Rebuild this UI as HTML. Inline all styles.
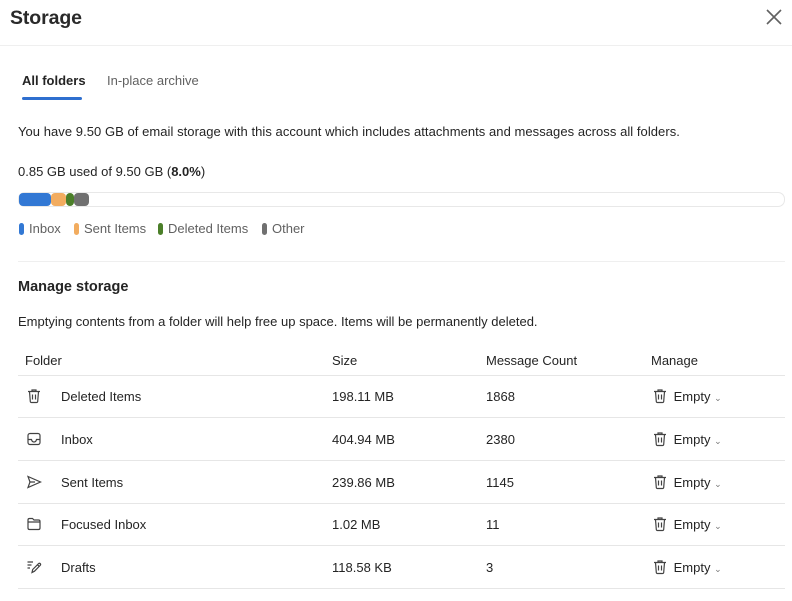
<!DOCTYPE html>
<html><head><meta charset="utf-8"><style>
*{margin:0;padding:0;box-sizing:border-box}
body{width:792px;height:601px;background:#fff;font-family:"Liberation Sans",sans-serif;color:#242424;position:relative;overflow:hidden;font-size:13px}
.a{position:absolute;white-space:nowrap}
.t{font-size:13px}
.line{position:absolute;height:1px;background:#e6e6e6}
.seg{position:absolute;top:193px;height:13px;border-radius:4px}
.dot{display:inline-block;width:5px;height:12px;border-radius:3px;vertical-align:-2px;margin-right:5px}
.lg{color:#616161;top:221px}
.ic{position:absolute;stroke:#424242;fill:none;stroke-width:1.2}
</style></head><body>
<div class="a" style="left:10px;top:7px;font-size:19.5px;font-weight:bold;letter-spacing:-.1px;color:#2a2a2a">Storage</div>
<svg class="a" style="left:765px;top:8px" width="18" height="18" viewBox="0 0 18 18"><path d="M2 2L16 16M16 2L2 16" stroke="#616161" stroke-width="1.6"/></svg>
<div class="line" style="left:0;top:45px;width:792px;background:#efefef"></div>
<div class="a t" style="left:22px;top:73px;font-weight:bold">All folders</div>
<div class="a t" style="left:107px;top:73px;color:#616161">In-place archive</div>
<div class="a" style="left:22px;top:97px;width:60px;height:3px;background:#2f6fcf;border-radius:2px"></div>
<div class="a t" style="left:18px;top:124px;letter-spacing:.05px">You have 9.50 GB of email storage with this account which includes attachments and messages across all folders.</div>
<div class="a t" style="left:18px;top:164px">0.85 GB used of 9.50 GB (<b>8.0%</b>)</div>
<div class="a" style="left:18px;top:192px;width:767px;height:15px;border:1px solid #e8e8e8;border-radius:7px"></div>
<div class="seg" style="left:19px;width:32px;background:#3278d4"></div>
<div class="seg" style="left:51px;width:15px;background:#f2ac5f"></div>
<div class="seg" style="left:66px;width:8px;background:#4b7f29"></div>
<div class="seg" style="left:74px;width:15px;background:#707070"></div>
<div class="a lg t" style="left:19px"><span class="dot" style="background:#3278d4"></span>Inbox</div>
<div class="a lg t" style="left:74px"><span class="dot" style="background:#f2ac5f"></span>Sent Items</div>
<div class="a lg t" style="left:158px"><span class="dot" style="background:#4b7f29"></span>Deleted Items</div>
<div class="a lg t" style="left:262px"><span class="dot" style="background:#707070"></span>Other</div>
<div class="line" style="left:18px;top:261px;width:767px;background:#efefef"></div>
<div class="a" style="left:18px;top:279px;font-size:14.5px;font-weight:bold">Manage storage</div>
<div class="a t" style="left:18px;top:314px">Emptying contents from a folder will help free up space. Items will be permanently deleted.</div>
<div class="a t" style="left:25px;top:353px">Folder</div>
<div class="a t" style="left:332px;top:353px">Size</div>
<div class="a t" style="left:486px;top:353px">Message Count</div>
<div class="a t" style="left:651px;top:353px">Manage</div>
<div class="line" style="left:18px;top:375px;width:767px"></div>

<div class="line" style="left:18px;top:417px;width:767px"></div>
<div class="line" style="left:18px;top:460px;width:767px"></div>
<div class="line" style="left:18px;top:503px;width:767px"></div>
<div class="line" style="left:18px;top:545px;width:767px"></div>
<div class="line" style="left:18px;top:588px;width:767px"></div>

<svg class="ic" style="left:26px;top:388px" width="16" height="16" viewBox="0 0 16 16"><path d="M2 3.5H14M6 3.5V2H10V3.5M3.5 3.5L4.3 13.5Q4.4 14.5 5.5 14.5H10.5Q11.6 14.5 11.7 13.5L12.5 3.5M6.5 6.5V11.5M9.5 6.5V11.5"/></svg>
<svg class="ic" style="left:26px;top:431px" width="16" height="16" viewBox="0 0 16 16"><rect x="2" y="2.5" width="12" height="11" rx="2"/><path d="M2 8.5H5.5Q6 11 8 11Q10 11 10.5 8.5H14"/></svg>
<svg class="ic" style="left:26px;top:474px" width="16" height="16" viewBox="0 0 16 16"><path d="M2 2.5L14.5 8L2 13.5L4 8ZM4 8H9"/></svg>
<svg class="ic" style="left:26px;top:516px" width="16" height="16" viewBox="0 0 16 16"><path d="M2 4Q2 2.5 3.5 2.5H6.5L8 4H12.5Q14 4 14 5.5V12Q14 13.5 12.5 13.5H3.5Q2 13.5 2 12ZM2 6H14"/></svg>
<svg class="ic" style="left:26px;top:559px" width="16" height="16" viewBox="0 0 16 16"><path d="M1.5 3H7M1.5 6H5.5M1.5 9H4M6 13.5L6.7 10.5L12.5 4.7Q13.5 3.8 14.3 4.7Q15 5.5 14.2 6.4L8.5 12.2ZM11.5 5.7L13.2 7.4"/></svg>

<div class="a t" style="left:61px;top:389px">Deleted Items</div>
<div class="a t" style="left:61px;top:432px">Inbox</div>
<div class="a t" style="left:61px;top:475px">Sent Items</div>
<div class="a t" style="left:61px;top:517px">Focused Inbox</div>
<div class="a t" style="left:61px;top:560px">Drafts</div>

<div class="a t" style="left:332px;top:389px">198.11 MB</div>
<div class="a t" style="left:332px;top:432px">404.94 MB</div>
<div class="a t" style="left:332px;top:475px">239.86 MB</div>
<div class="a t" style="left:332px;top:517px">1.02 MB</div>
<div class="a t" style="left:332px;top:560px">118.58 KB</div>

<div class="a t" style="left:486px;top:389px">1868</div>
<div class="a t" style="left:486px;top:432px">2380</div>
<div class="a t" style="left:486px;top:475px">1145</div>
<div class="a t" style="left:486px;top:517px">11</div>
<div class="a t" style="left:486px;top:560px">3</div>

<div class="a" style="left:652px;top:388px"><svg class="ic" style="position:static;vertical-align:-3px" width="16" height="16" viewBox="0 0 16 16"><path d="M2 3.5H14M6 3.5V2H10V3.5M3.5 3.5L4.3 13.5Q4.4 14.5 5.5 14.5H10.5Q11.6 14.5 11.7 13.5L12.5 3.5M6.5 6.5V11.5M9.5 6.5V11.5"/></svg> <span class="t" style="margin-left:2px">Empty</span> <span style="color:#777;font-size:9px">&#8964;</span></div>
<div class="a" style="left:652px;top:431px"><svg class="ic" style="position:static;vertical-align:-3px" width="16" height="16" viewBox="0 0 16 16"><path d="M2 3.5H14M6 3.5V2H10V3.5M3.5 3.5L4.3 13.5Q4.4 14.5 5.5 14.5H10.5Q11.6 14.5 11.7 13.5L12.5 3.5M6.5 6.5V11.5M9.5 6.5V11.5"/></svg> <span class="t" style="margin-left:2px">Empty</span> <span style="color:#777;font-size:9px">&#8964;</span></div>
<div class="a" style="left:652px;top:474px"><svg class="ic" style="position:static;vertical-align:-3px" width="16" height="16" viewBox="0 0 16 16"><path d="M2 3.5H14M6 3.5V2H10V3.5M3.5 3.5L4.3 13.5Q4.4 14.5 5.5 14.5H10.5Q11.6 14.5 11.7 13.5L12.5 3.5M6.5 6.5V11.5M9.5 6.5V11.5"/></svg> <span class="t" style="margin-left:2px">Empty</span> <span style="color:#777;font-size:9px">&#8964;</span></div>
<div class="a" style="left:652px;top:516px"><svg class="ic" style="position:static;vertical-align:-3px" width="16" height="16" viewBox="0 0 16 16"><path d="M2 3.5H14M6 3.5V2H10V3.5M3.5 3.5L4.3 13.5Q4.4 14.5 5.5 14.5H10.5Q11.6 14.5 11.7 13.5L12.5 3.5M6.5 6.5V11.5M9.5 6.5V11.5"/></svg> <span class="t" style="margin-left:2px">Empty</span> <span style="color:#777;font-size:9px">&#8964;</span></div>
<div class="a" style="left:652px;top:559px"><svg class="ic" style="position:static;vertical-align:-3px" width="16" height="16" viewBox="0 0 16 16"><path d="M2 3.5H14M6 3.5V2H10V3.5M3.5 3.5L4.3 13.5Q4.4 14.5 5.5 14.5H10.5Q11.6 14.5 11.7 13.5L12.5 3.5M6.5 6.5V11.5M9.5 6.5V11.5"/></svg> <span class="t" style="margin-left:2px">Empty</span> <span style="color:#777;font-size:9px">&#8964;</span></div>
</body></html>
